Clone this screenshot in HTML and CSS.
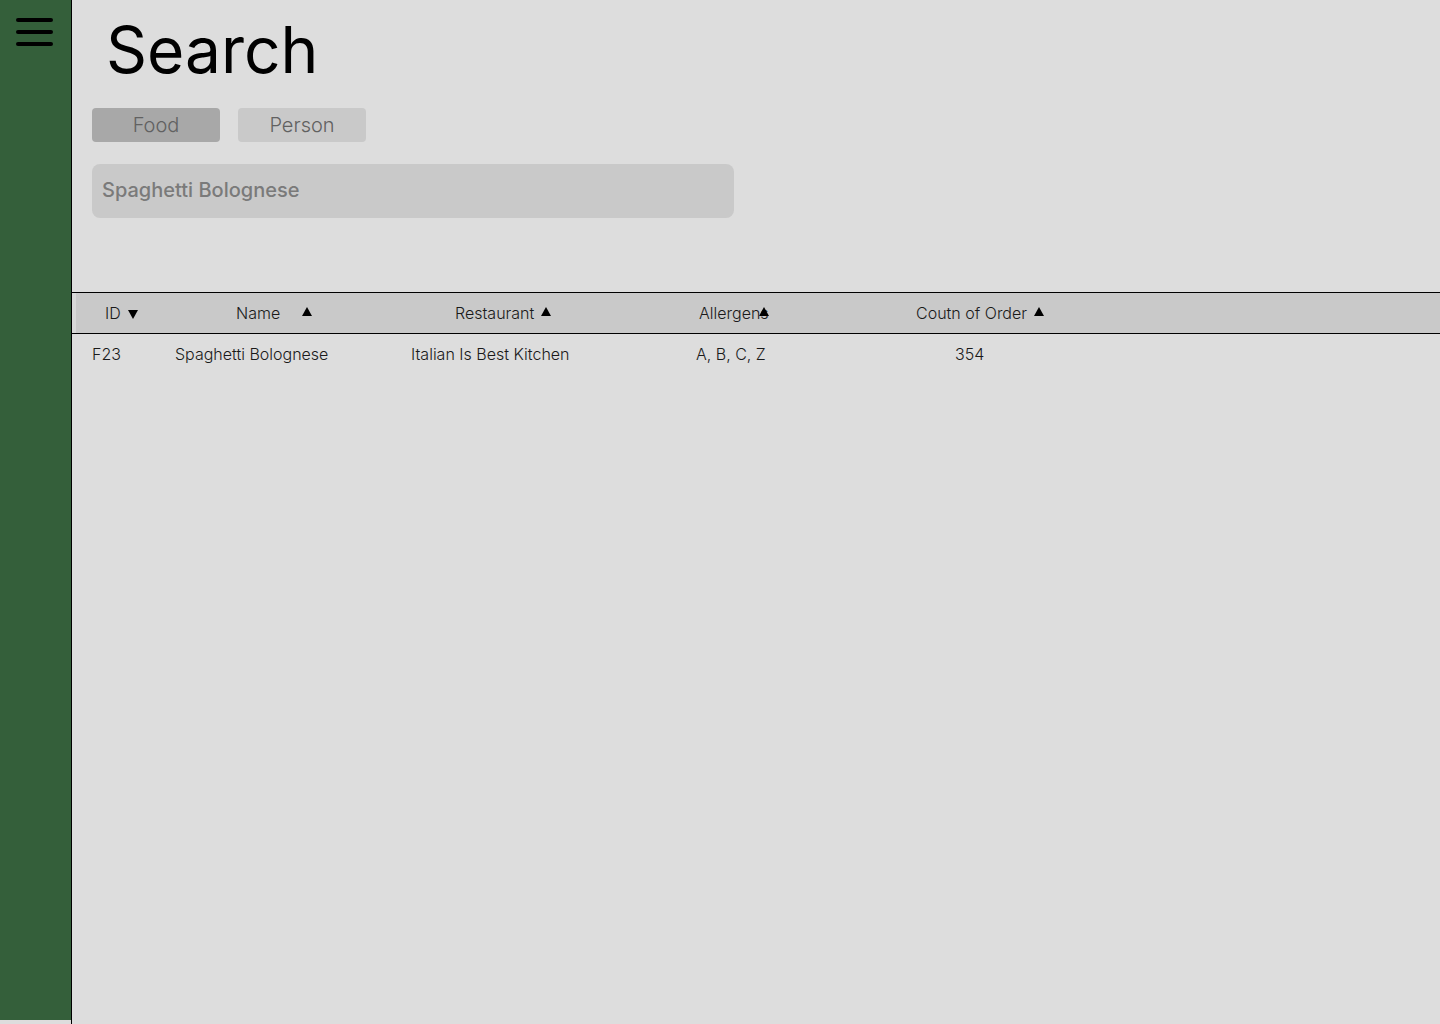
FILE: index.html
```html
<!DOCTYPE html>
<html lang="en">
<head>
<meta charset="utf-8">
<title>Search</title>
<link rel="stylesheet" href="styles.css">
</head>
<body>
<div class="app">
  <aside class="sidebar">
    <button class="menu-btn" aria-label="Menu">
      <svg width="71" height="64" viewBox="0 0 71 64">
        <g stroke="#000" stroke-width="4" stroke-linecap="round">
          <line x1="18" y1="20" x2="51" y2="20"/>
          <line x1="18" y1="32" x2="51" y2="32"/>
          <line x1="18" y1="44" x2="51" y2="44"/>
        </g>
      </svg>
    </button>
  </aside>
  <main class="main">
    <div class="top">
      <h1 class="title">Search</h1>
      <div class="tabs">
        <button class="tab tab-active">Food</button>
        <button class="tab">Person</button>
      </div>
      <div class="search-box">Spaghetti Bolognese</div>
    </div>
    <div class="table">
      <div class="thead-wrap">
        <div class="thead">
          <div class="th">ID<span class="arrow down a-id"></span></div>
          <div class="th">Name<span class="arrow up a-name"></span></div>
          <div class="th">Restaurant<span class="arrow up a-gap"></span></div>
          <div class="th">Allergens<span class="arrow up a-over"></span></div>
          <div class="th">Coutn of Order<span class="arrow up a-gap"></span></div>
        </div>
      </div>
      <div class="trow">
        <div class="td">F23</div>
        <div class="td">Spaghetti Bolognese</div>
        <div class="td">Italian Is Best Kitchen</div>
        <div class="td">A, B, C, Z</div>
        <div class="td">354</div>
      </div>
    </div>
  </main>
</div>
</body>
</html>
```
FILE: styles.css
```css
* { box-sizing: border-box; }
html, body {
  margin: 0;
  padding: 0;
  background: #dddddd;
  font-family: Inter, "Noto Sans", sans-serif;
  color: #1a1a1a;
}
.app {
  display: flex;
  width: 1440px;
  height: 1024px;
  overflow: hidden;
}
.sidebar {
  width: 71px;
  height: 1020px;
  flex: 0 0 71px;
  background: #345f3a;
}
.menu-btn {
  display: block;
  padding: 0;
  margin: 0;
  border: 0;
  background: none;
  cursor: pointer;
}
.menu-btn svg { display: block; }
.main {
  flex: 1;
  border-left: 1px solid #000;
  height: 1024px;
}
.top {
  padding: 18px 0 0 20px;
}
.title {
  margin: 0 0 26px 0;
  padding-left: 14px;
  font-size: 64px;
  line-height: 64px;
  font-weight: 400;
  color: #000;
}
.tabs {
  display: flex;
  gap: 18px;
}
.tab {
  width: 128px;
  height: 34px;
  border: 0;
  border-radius: 4px;
  background: #c9c9c9;
  color: #616161;
  font-family: Inter, "Noto Sans", sans-serif;
  font-size: 20px;
  font-weight: 300;
  line-height: 34px;
  padding: 0;
}
.tab-active {
  background: #a8a8a8;
}
.search-box {
  margin-top: 22px;
  width: 642px;
  height: 54px;
  border-radius: 8px;
  background: #c9c9c9;
  color: #7a7a7a;
  font-size: 20px;
  font-weight: 500;
  line-height: 52px;
  padding-left: 10px;
}
.table {
  margin-top: 74px;
}
.thead-wrap {
  border-top: 1px solid #000;
  border-bottom: 1px solid #000;
  background: #d8d8d8;
}
.thead {
  margin-left: 4px;
  height: 40px;
  background: #c9c9c9;
  display: grid;
  grid-template-columns: 131px 219px 244px 217px 1fr;
  padding-left: 29px;
  align-items: center;
  font-size: 16px;
  font-weight: 300;
}
.th {
  display: flex;
  align-items: center;
  white-space: nowrap;
}
.arrow {
  display: inline-block;
  width: 0;
  height: 0;
  border-left: 5.5px solid transparent;
  border-right: 5.5px solid transparent;
}
.arrow.up {
  border-bottom: 9px solid #000;
  margin-top: -3px;
}
.arrow.down {
  border-top: 9px solid #000;
  margin-top: 2px;
}
.a-id { margin-left: 7px; }
.a-name { margin-left: 22px; }
.a-gap { margin-left: 7px; }
.a-over { margin-left: -10px; }
.trow {
  display: grid;
  grid-template-columns: 83px 236px 285px 259px 1fr;
  padding-left: 20px;
  height: 40px;
  align-items: center;
  font-size: 16px;
  font-weight: 300;
  white-space: nowrap;
}
```
